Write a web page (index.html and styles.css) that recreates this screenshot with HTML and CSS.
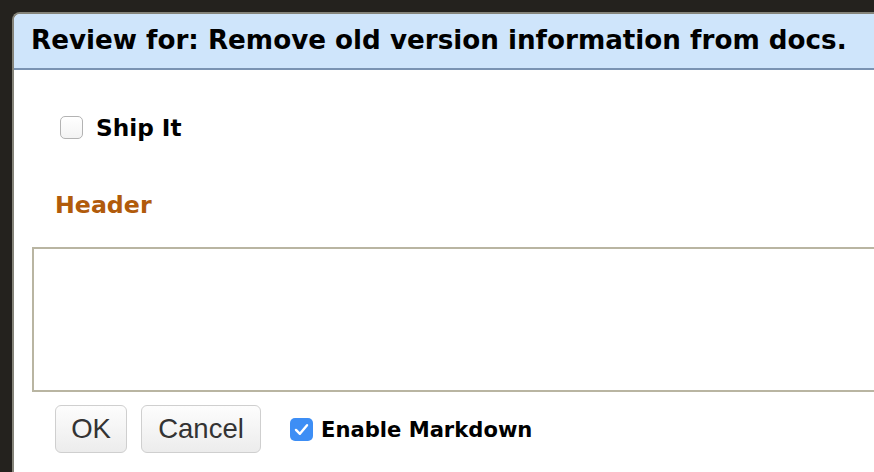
FILE: index.html
```html
<!DOCTYPE html>
<html>
<head>
<meta charset="utf-8">
<link rel="stylesheet" href="styles.css">
</head>
<body>
<div class="dialog">
  <div class="dialog-title">Review for: Remove old version information from docs.</div>
  <div class="dialog-body">
    <label class="ship">
      <span class="box"></span>
      <span class="ship-label">Ship It</span>
    </label>
    <div class="section-title">Header</div>
    <div class="textarea"></div>
    <div class="actions">
      <button class="btn btn-ok">OK</button>
      <button class="btn btn-cancel">Cancel</button>
      <label class="markdown">
        <span class="box checked">
          <svg viewBox="0 0 24 24" width="19" height="19"><path d="M5 12.5 L10 17.5 L19 6.5" fill="none" stroke="#fff" stroke-width="3" stroke-linecap="round" stroke-linejoin="round"/></svg>
        </span>
        <span class="md-label">Enable Markdown</span>
      </label>
    </div>
  </div>
</div>
</body>
</html>
```
FILE: styles.css
```css
html, body {
  margin: 0;
  padding: 0;
  height: 100%;
  overflow: hidden;
}
body {
  background: #24221e;
  padding: 12px 0 0 12px;
  box-sizing: border-box;
  font-family: "DejaVu Sans", Verdana, sans-serif;
}
.dialog {
  width: 862px;
  height: 460px;
  background: #fff;
  border-top: 2px solid #85847a;
  border-left: 2px solid #85847a;
  border-top-left-radius: 8px;
  overflow: hidden;
  box-sizing: border-box;
}
.dialog-title {
  background: #cfe5fb;
  border-bottom: 2px solid #7a93b2;
  height: 56px;
  box-sizing: border-box;
  padding: 10px 0 0 17px;
  font-weight: bold;
  font-size: 26.2px;
  line-height: 32px;
  color: #000;
  white-space: nowrap;
}
.dialog-body {
  padding: 44px 0 0 18px;
}
.ship {
  display: flex;
  align-items: center;
  gap: 13px;
  margin-left: 28px;
  height: 26px;
}
.box {
  width: 23px;
  height: 23px;
  box-sizing: border-box;
  border: 1.5px solid #b3b3b3;
  border-radius: 5px;
  background: linear-gradient(#ffffff, #f3f3f3);
  display: flex;
  align-items: center;
  justify-content: center;
  flex-shrink: 0;
}
.box.checked {
  border: none;
  background: #3d8ef5;
}
.ship-label {
  font-weight: bold;
  font-size: 23.2px;
  color: #000;
}
.section-title {
  margin: 50px 0 0 23px;
  font-weight: bold;
  font-size: 23.7px;
  line-height: 30px;
  color: #b15b0b;
}
.textarea {
  margin-top: 27px;
  height: 145px;
  box-sizing: border-box;
  border: 2px solid #b9b5a2;
  border-right: none;
}
.actions {
  display: flex;
  align-items: center;
  margin: 13px 0 0 23px;
}
.btn {
  height: 48px;
  box-sizing: border-box;
  border: 1.5px solid #cfcfcf;
  border-radius: 6px;
  background: linear-gradient(#fdfdfd, #ececec);
  font-family: "Liberation Sans", Arial, sans-serif;
  font-size: 27.5px;
  color: #333;
  padding: 0;
}
.btn-ok {
  width: 72px;
}
.btn-cancel {
  width: 120px;
  margin-left: 14px;
}
.markdown {
  display: flex;
  align-items: center;
  gap: 8px;
  margin-left: 29px;
}
.md-label {
  font-weight: bold;
  font-size: 21.1px;
  color: #000;
}
```
